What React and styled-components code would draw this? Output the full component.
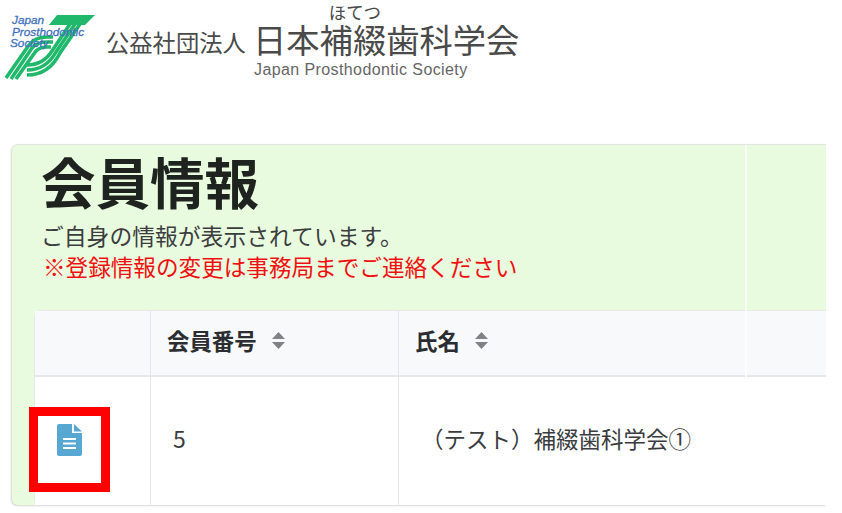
import styled, { createGlobalStyle } from "styled-components"

const GlobalStyle = createGlobalStyle`
html, body {
  margin:0;
  padding:0;
  background:#fff;
  overflow:hidden;
}
body {
  font-family:"Noto Sans CJK JP","Noto Sans",sans-serif;
  color:#2b2d30;
}
`

const App = () => {
  return (
    <Page>
      <GlobalStyle />
      <Header>
        <LogoMark />
        <OrgType>公益社団法人</OrgType>
        <OrgName>
          <NameRow>
            日本
            <ruby>補綴<rt>ほてつ</rt></ruby>
            歯科学会
          </NameRow>
          <NameEn>Japan Prosthodontic Society</NameEn>
        </OrgName>
      </Header>

      <Card>
        <Title>会員情報</Title>
        <Lead>ご自身の情報が表示されています。</Lead>
        <Notice>※登録情報の変更は事務局までご連絡ください</Notice>

        <Table>
          <colgroup>
            <col width="116" />
            <col width="248" />
            <col width="347" />
            <col width="120" />
          </colgroup>
          <thead>
            <tr>
              <Th />
              <Th><Sortable>会員番号<SortIcon /></Sortable></Th>
              <Th><Sortable>氏名<SortIcon /></Sortable></Th>
              <Th />
            </tr>
          </thead>
          <tbody>
            <tr>
              <Td><DocIcon /></Td>
              <NumberCell>5</NumberCell>
              <NameCell>（テスト）補綴歯科学会①</NameCell>
              <Td />
            </tr>
          </tbody>
        </Table>
        <Seam />
      </Card>
      <RedMark />
    </Page>
  )
}

export default App

const LogoMark = () => (
  <LogoBox>
    <svg width="92" height="66" viewBox="0 0 92 66" aria-hidden="true">
      <path d="M52 0 L90 0 L80 10 L44 10 Z" fill="#20b96c" />
      <g fill="none" stroke="#20b96c" strokeWidth="3.600">
        <path d="M1 63 L24 30 Q30 22 42 22 L48 22" />
        <path d="M6 64 L27 33 Q32 27 42 27 L48 27" />
        <path d="M11 64 L31 36 Q35 32 42 32 L46 32" />
        <path d="M65 9 L47 36 Q38 50 22 50" />
        <path d="M70 9 L51 37 Q41 55 22 55" />
        <path d="M75 9 L55 38 Q44 60 22 60" />
      </g>
      <LogoText x="7" y="9">Japan</LogoText>
      <LogoText x="7" y="21">Prosthodontic</LogoText>
      <LogoText x="5" y="32">Society</LogoText>
    </svg>
  </LogoBox>
)

const SortIcon = () => (
  <SortSvg width="13" height="17" viewBox="0 0 13 17" aria-hidden="true">
    <path d="M6.500 0 L13 7 L0 7 Z M0 10 L13 10 L6.500 17 Z" fill="#808285" />
  </SortSvg>
)

const DocIcon = () => (
  <DocSvg width="25" height="32" viewBox="0 0 25 32" aria-hidden="true">
    <path d="M2 0 L15 0 L15 9 L25 9 L25 30 Q25 32 23 32 L2 32 Q0 32 0 30 L0 2 Q0 0 2 0 Z" fill="#56a8d3" />
    <path d="M17 0 L25 7.500 L17 7.500 Z" fill="#56a8d3" />
    <path d="M6 15 H19 M6 19.500 H19 M6 24 H19" stroke="#fff" strokeWidth="2" />
  </DocSvg>
)

const Page = styled.div`
position:relative;
width:842px;
height:513px;
overflow:hidden;
`

const Header = styled.header`
display:flex;
align-items:flex-start;
height:144px;
padding-left:5px;
color:#4a4a4a;
`

const LogoBox = styled.div`
width:101px;
padding-top:15px;
svg {
  display:block;
}
`

const LogoText = styled.text`
font-family:"Liberation Sans",sans-serif;
font-size:11.800px;
font-style:italic;
fill:#3f70bd;
stroke:#3f70bd;
stroke-width:.3px;
`

const OrgType = styled.div`
width:147px;
margin-top:25px;
font-size:23.300px;
line-height:34px;
white-space:nowrap;
`

const OrgName = styled.div`
display:flex;
flex-direction:column;
margin-top:4px;
`

const NameRow = styled.div`
font-size:33.300px;
line-height:38px;
white-space:nowrap;
ruby-position:over;
rt {
  position:relative;
  left:2px;
  top:-1px;
  font-size:17.500px;
  line-height:18px;
  text-align:center;
}
`

const NameEn = styled.div`
margin:4px 0 0 1px;
font-family:"Liberation Sans",sans-serif;
font-size:16px;
line-height:16px;
letter-spacing:.4px;
color:#666;
`

const Card = styled.section`
position:relative;
width:814px;
height:361px;
box-sizing:border-box;
margin-left:12px;
padding-left:23px;
background:#e9fbde;
border-top:1px solid #e3e5e0;
box-shadow:-1px 1px 2px #d5d6d4;
clip-path:inset(-2px 0 -5px -3px);
border-radius:6px 0 0 6px;
overflow:hidden;
`

const Title = styled.h1`
margin:0;
padding-left:6px;
font-size:54.500px;
line-height:71px;
font-weight:700;
color:#1f2320;
`

const Lead = styled.p`
margin:0;
padding:4px 0 0 6px;
font-size:22.800px;
line-height:31px;
color:#3b3d3f;
`

const Notice = styled.p`
margin:0 0 29px;
padding-left:8px;
font-size:22.600px;
line-height:31px;
color:#f01010;
`

const Table = styled.table`
width:831px;
height:194px;
table-layout:fixed;
border-collapse:separate;
border-spacing:0;
background:#fff;
border-radius:6px 0 0 6px;
box-shadow:0 0 0 1px #e6e8eb;
`

const Th = styled.th`
height:66px;
padding:0 0 6px 16px;
box-sizing:border-box;
text-align:left;
font-size:22.400px;
font-weight:700;
color:#2b2d30;
background:#f8f9fb;
border-bottom:2px solid #e5e7eb;
border-right:1px solid #e5e7eb;
&:nth-child(3) {
  border-right:none;
}
`

const Td = styled.td`
padding:0 0 2px 22px;
font-size:22.500px;
font-weight:400;
color:#3a3c40;
background:#fff;
border-right:1px solid #e5e7eb;
&:nth-child(3) {
  border-right:none;
}
`

const NumberCell = styled(Td)`
padding-bottom:6px;
font-size:23px;
`

const NameCell = styled(Td)`
padding-bottom:6px;
`

const Sortable = styled.span`
display:inline-flex;
align-items:center;
gap:15px;
`

const SortSvg = styled.svg`
display:block;
`

const DocSvg = styled.svg`
display:block;
`

const Seam = styled.div`
position:absolute;
top:0;
bottom:0;
left:733px;
width:2px;
background:rgba(255,255,255,.75);
`

const RedMark = styled.div`
position:absolute;
left:29px;
top:407px;
width:63px;
height:67px;
border:9px solid #ff0000;
`
